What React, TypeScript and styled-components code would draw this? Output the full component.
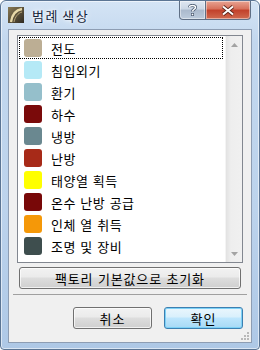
import React from 'react';
import styled, { createGlobalStyle } from 'styled-components';

const GlobalStyle = createGlobalStyle`
  html, body {
    margin: 0;
    padding: 0;
    background: #ffffff;
  }
  * {
    box-sizing: border-box;
  }
`;

const FONT = `"Noto Sans CJK KR", "Noto Sans", sans-serif`;

const Window = styled.div`
  width: 260px;
  height: 350px;
  border: 1px solid #5b7594;
  border-radius: 6px 6px 4px 4px;
  background: linear-gradient(180deg, #d4e4f5 0%, #c2d7ee 12%, #bcd3ec 60%, #aec8e6 100%);
  padding: 0 7px 6px 7px;
  display: flex;
  flex-direction: column;
  font-family: ${FONT};
  box-shadow: inset 0 0 0 1px rgba(255, 255, 255, 0.55);
`;

const TitleBar = styled.div`
  height: 28px;
  display: flex;
  align-items: center;
  flex-shrink: 0;
`;

const TitleText = styled.span`
  margin-left: 8px;
  font-size: 13px;
  color: #14243a;
  text-shadow: 0 0 6px #ffffff, 0 0 3px #ffffff;
  flex: 1;
  letter-spacing: 1.5px;
  word-spacing: -1px;
`;

const CaptionButtons = styled.div`
  align-self: flex-start;
  display: flex;
  margin-right: 1px;
`;

const CaptionButton = styled.div<{ $kind: 'help' | 'close' }>`
  height: 19px;
  width: ${(p) => (p.$kind === 'help' ? '27px' : '45px')};
  display: flex;
  align-items: center;
  justify-content: center;
  border: 1px solid #5f6f85;
  border-top: none;
  border-radius: ${(p) => (p.$kind === 'help' ? '0 0 0 4px' : '0 0 4px 0')};
  border-left: ${(p) => (p.$kind === 'close' ? 'none' : '1px solid #5f6f85')};
  background: ${(p) =>
    p.$kind === 'help'
      ? 'linear-gradient(180deg, #dfe7f1 0%, #cbd7e6 45%, #aab9cc 50%, #bccbdc 100%)'
      : 'linear-gradient(180deg, #e8a493 0%, #d7705a 45%, #c2402a 50%, #d06a4f 100%)'};
  box-shadow: inset 0 0 0 1px rgba(255, 255, 255, 0.45);
`;

const Client = styled.div`
  flex: 1;
  position: relative;
  border: 1px solid #8d9db3;
  background: #f0f0f0;
  padding: 5px 8px 0 8px;
  display: flex;
  flex-direction: column;
`;

const ListBox = styled.div`
  height: 228px;
  border: 1px solid #828790;
  background: #ffffff;
  display: flex;
  flex-shrink: 0;
`;

const Rows = styled.div`
  flex: 1;
  padding: 1px 2px 0 1px;
`;

const Row = styled.div<{ $focused?: boolean }>`
  height: 22px;
  display: flex;
  align-items: center;
  padding-left: 5px;
  outline: ${(p) => (p.$focused ? '1px dotted #000' : 'none')};
  outline-offset: -1px;
`;

const Swatch = styled.span<{ $color: string }>`
  width: 18px;
  height: 18px;
  border-radius: 3px;
  background: ${(p) => p.$color};
  flex-shrink: 0;
`;

const RowLabel = styled.span`
  margin-left: 9px;
  font-size: 13px;
  letter-spacing: 0.5px;
  word-spacing: 1px;
  color: #000;
  line-height: 15px;
`;

const ScrollBar = styled.div`
  width: 17px;
  background: linear-gradient(90deg, #e2e2e2 0%, #eeeeee 30%, #f0f0f0 100%);
  display: flex;
  flex-direction: column;
  justify-content: space-between;
  border-left: 1px solid #f4f4f4;
`;

const ArrowBox = styled.div`
  height: 17px;
  display: flex;
  align-items: center;
  justify-content: center;
`;

const PushButton = styled.div<{ $default?: boolean }>`
  height: 22px;
  display: flex;
  align-items: center;
  justify-content: center;
  font-size: 13px;
  letter-spacing: 1px;
  color: #000;
  border-radius: 3px;
  border: 1px solid ${(p) => (p.$default ? '#3c7fb1' : '#707070')};
  background: ${(p) =>
    p.$default
      ? 'linear-gradient(180deg, #eaf6fd 0%, #d9f0fc 45%, #bee6fd 50%, #a7d9f5 100%)'
      : 'linear-gradient(180deg, #f2f2f2 0%, #ebebeb 45%, #dddddd 50%, #cfcfcf 100%)'};
  box-shadow: inset 0 0 0 1px ${(p) => (p.$default ? '#7dd1f6' : 'rgba(255,255,255,0.7)')};
`;

const FactoryButton = styled(PushButton)`
  margin: 4px 2px 0 2px;
  letter-spacing: 0.8px;
  word-spacing: 1px;
`;

const Separator = styled.div`
  margin: 5px -4px 0 -4px;
  height: 1px;
  background: #a0a0a0;
`;

const ButtonRow = styled.div`
  margin-top: 12px;
  display: flex;
  justify-content: flex-end;
  gap: 12px;
`;

const DialogButton = styled(PushButton)`
  width: 79px;
`;

const SizeGrip = styled.svg`
  position: absolute;
  right: 1px;
  bottom: 1px;
`;

const swatches = [
  { label: '전도', color: '#bcae94' },
  { label: '침입외기', color: '#b5e9f6' },
  { label: '환기', color: '#95bfcb' },
  { label: '하수', color: '#7a0a0a' },
  { label: '냉방', color: '#6a8890' },
  { label: '난방', color: '#a72a18' },
  { label: '태양열 획득', color: '#ffff00' },
  { label: '온수 난방 공급', color: '#780808' },
  { label: '인체 열 취득', color: '#f59808' },
  { label: '조명 및 장비', color: '#3e4e4e' },
];

const AppIcon = () => (
  <svg width="16" height="16" viewBox="0 0 16 16">
    <defs>
      <linearGradient id="ic" x1="0" y1="0" x2="1" y2="1">
        <stop offset="0" stopColor="#8a7a55" />
        <stop offset="1" stopColor="#2e2a22" />
      </linearGradient>
    </defs>
    <rect x="0" y="0" width="16" height="16" fill="url(#ic)" />
    <path d="M3 15 C4 8 8 3 14 2" stroke="#e8d9a8" strokeWidth="2.4" fill="none" />
    <path d="M6 15 C7 10 10 6 14 5" stroke="#b8a679" strokeWidth="1" fill="none" />
  </svg>
);

const App = () => {
  return (
    <>
      <GlobalStyle />
      <Window>
        <TitleBar>
          <AppIcon />
          <TitleText>범례 색상</TitleText>
          <CaptionButtons>
            <CaptionButton $kind="help">
              <svg width="9" height="12" viewBox="0 0 9 12">
                <path
                  d="M1.5 3.2 C1.5 0.8 7.5 0.8 7.5 3.4 C7.5 5.2 4.5 5.4 4.5 7.6"
                  stroke="#4a5a70"
                  strokeWidth="3"
                  fill="none"
                />
                <path
                  d="M1.5 3.2 C1.5 0.8 7.5 0.8 7.5 3.4 C7.5 5.2 4.5 5.4 4.5 7.6"
                  stroke="#ffffff"
                  strokeWidth="1.5"
                  fill="none"
                />
                <rect x="3" y="9" width="3" height="3" fill="#4a5a70" />
                <rect x="3.7" y="9.7" width="1.6" height="1.6" fill="#ffffff" />
              </svg>
            </CaptionButton>
            <CaptionButton $kind="close">
              <svg width="14" height="11" viewBox="0 0 14 11">
                <path d="M2 1.5 L12 9.5 M12 1.5 L2 9.5" stroke="#5a2418" strokeWidth="3.6" />
                <path d="M2 1.5 L12 9.5 M12 1.5 L2 9.5" stroke="#ffffff" strokeWidth="2" />
              </svg>
            </CaptionButton>
          </CaptionButtons>
        </TitleBar>
        <Client>
          <ListBox>
            <Rows>
              {swatches.map((s, i) => (
                <Row key={s.label} $focused={i === 0}>
                  <Swatch $color={s.color} />
                  <RowLabel>{s.label}</RowLabel>
                </Row>
              ))}
            </Rows>
            <ScrollBar>
              <ArrowBox>
                <svg width="7" height="4" viewBox="0 0 7 4">
                  <path d="M0 4 L3.5 0 L7 4 Z" fill="#a3a3a3" />
                </svg>
              </ArrowBox>
              <ArrowBox>
                <svg width="7" height="4" viewBox="0 0 7 4">
                  <path d="M0 0 L7 0 L3.5 4 Z" fill="#a3a3a3" />
                </svg>
              </ArrowBox>
            </ScrollBar>
          </ListBox>
          <FactoryButton>팩토리 기본값으로 초기화</FactoryButton>
          <Separator />
          <ButtonRow>
            <DialogButton>취소</DialogButton>
            <DialogButton $default>확인</DialogButton>
          </ButtonRow>
          <SizeGrip width="10" height="10" viewBox="0 0 10 10">
            <rect x="7" y="1" width="2" height="2" fill="#b8b8b8" />
            <rect x="4" y="4" width="2" height="2" fill="#b8b8b8" />
            <rect x="7" y="4" width="2" height="2" fill="#b8b8b8" />
            <rect x="1" y="7" width="2" height="2" fill="#b8b8b8" />
            <rect x="4" y="7" width="2" height="2" fill="#b8b8b8" />
            <rect x="7" y="7" width="2" height="2" fill="#b8b8b8" />
          </SizeGrip>
        </Client>
      </Window>
    </>
  );
};

export default App;
